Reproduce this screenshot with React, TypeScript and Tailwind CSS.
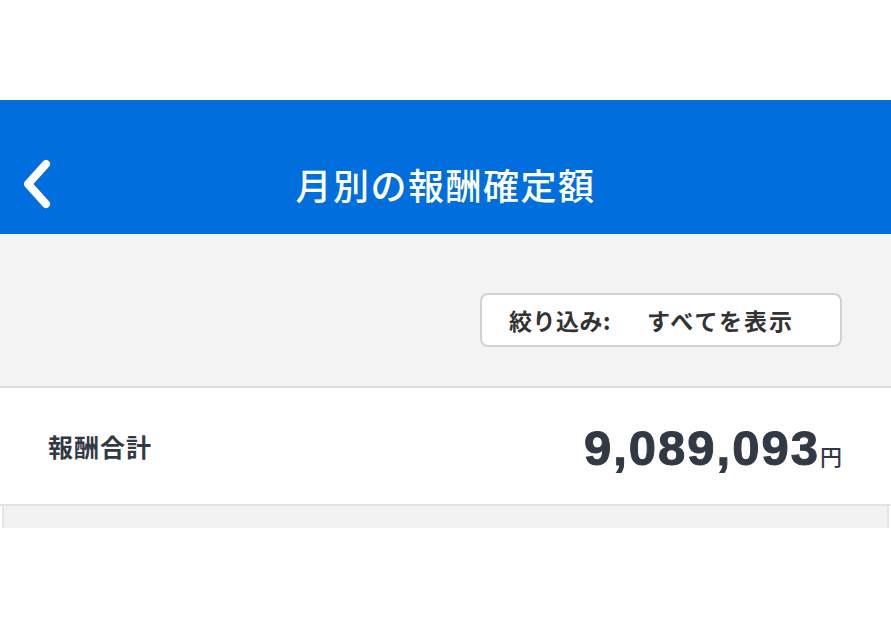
export default function App() {
  return (
    <div
      className="w-[891px] h-[628px] bg-white overflow-hidden"
      style={{ fontFamily: '"Noto Sans CJK JP", "Liberation Sans", sans-serif' }}
    >
      <div className="h-[100px]" />

      <header className="relative h-[134px] bg-[#006fdd] pt-[34px]">
        <div className="relative h-[100px] flex items-center justify-center">
          <button className="absolute left-[18px] top-1/2 -translate-y-1/2" aria-label="back">
            <svg width="36" height="52" viewBox="0 0 36 52" fill="none" className="block">
              <path
                d="M28 6 L10 26 L28 46"
                stroke="white"
                strokeWidth="8"
                strokeLinecap="round"
                strokeLinejoin="round"
              />
            </svg>
          </button>
          <h1 className="text-white text-[36px] font-medium tracking-[1.5px] leading-none">
            月別の報酬確定額
          </h1>
        </div>
      </header>

      <div className="bg-[#f3f3f3] h-[154px] flex items-center justify-end pt-[20px] pr-[49px] border-b-2 border-[#dedede]">
        <div className="w-[362px] h-[54px] bg-white border-2 border-[#d2d2d2] rounded-[8px] flex items-center pl-[27px] text-[23px] font-bold text-[#333]">
          <span className="tracking-[0.5px]">絞り込み:</span>
          <span className="ml-[36px] tracking-[2px]">すべてを表示</span>
        </div>
      </div>

      <div className="h-[118px] flex items-center justify-between pl-[48px] pr-[49px] border-b-2 border-[#e3e3e3] text-[#313944]">
        <span className="text-[25px] font-bold tracking-[1px] pt-[2px]">報酬合計</span>
        <div className="flex items-baseline pt-[4px]">
          <span
            className="text-[49px] font-bold tracking-[2px] leading-none [-webkit-text-stroke:1px_#313944]"
            style={{ fontFamily: '"Liberation Sans", Arial, sans-serif' }}
          >
            9,089,093
          </span>
          <span className="text-[22px] font-medium">円</span>
        </div>
      </div>

      <div className="mx-[2px] h-[22px] bg-[#f2f2f2] border-x-2 border-[#e6e6e6]" />
    </div>
  );
}
